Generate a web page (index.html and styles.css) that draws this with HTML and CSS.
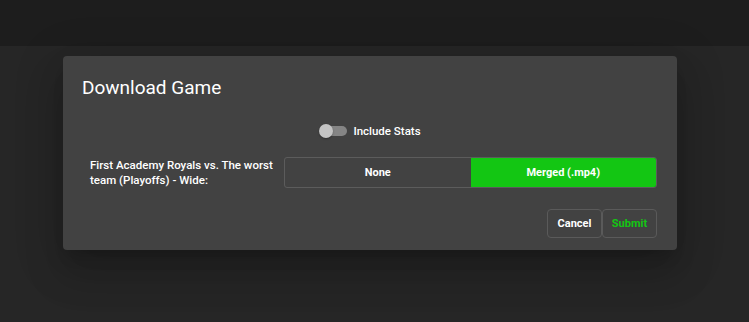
FILE: index.html
```html
<!DOCTYPE html>
<html lang="en">
<head>
    <meta charset="UTF-8">
    <meta name="viewport" content="width=device-width, initial-scale=1.0">
    <title>Download Game</title>
    <link rel="stylesheet" href="styles.css">
</head>
<body>
    <div class="appbar"></div>

    <div class="dialog">
        <div class="dialog-title">Download Game</div>

        <div class="switch-row">
            <span class="switch">
                <span class="switch-track"></span>
                <span class="switch-thumb"></span>
            </span>
            <span class="switch-label">Include Stats</span>
        </div>

        <div class="option-row">
            <div class="option-label">First Academy Royals vs. The worst team (Playoffs) - Wide:</div>
            <div class="toggle-group">
                <button class="toggle-button">None</button>
                <button class="toggle-button selected">Merged (.mp4)</button>
            </div>
        </div>

        <div class="dialog-actions">
            <button class="action-button">Cancel</button>
            <button class="action-button submit">Submit</button>
        </div>
    </div>
</body>
</html>
```

FILE: styles.css
```css
body {
    margin: 0;
    padding: 0;
    height: 322px;
    overflow: hidden;
    background-color: #262626;
    font-family: Roboto, "Liberation Sans", sans-serif;
    color: #fff;
}
.appbar {
    height: 46px;
    background-color: #1d1d1d;
}
.dialog {
    width: 614px;
    margin: 10px 0 0 63px;
    padding-bottom: 12px;
    background-color: #424242;
    border-radius: 4px;
    box-shadow: 0 11px 15px -7px rgba(0,0,0,0.2), 0 24px 38px 3px rgba(0,0,0,0.14), 0 9px 46px 8px rgba(0,0,0,0.12);
}
.dialog-title {
    padding: 20px 19px 0;
    font-size: 19px;
    line-height: 24px;
    font-weight: 400;
}
.switch-row {
    display: flex;
    justify-content: center;
    align-items: center;
    gap: 6px;
    margin-top: 21px;
    height: 20px;
}
.switch {
    position: relative;
    width: 28px;
    height: 14px;
}
.switch-track {
    position: absolute;
    left: 1px;
    right: 0;
    top: 2px;
    height: 10px;
    border-radius: 5px;
    background-color: #858585;
}
.switch-thumb {
    position: absolute;
    left: 0;
    top: 0;
    width: 14px;
    height: 14px;
    border-radius: 50%;
    background-color: #c4c4c4;
    box-shadow: 0 1px 2px rgba(0,0,0,0.3);
}
.switch-label {
    font-size: 11.5px;
    font-weight: 500;
}
.option-row {
    display: flex;
    align-items: center;
    margin-top: 16px;
    padding: 0 20px 0 27px;
}
.option-label {
    flex: 1;
    font-size: 11.5px;
    line-height: 15px;
    font-weight: 500;
}
.toggle-group {
    display: flex;
    width: 373px;
    height: 31px;
    border: 1px solid #5c5c5c;
    border-radius: 3px;
    box-sizing: border-box;
    overflow: hidden;
}
.toggle-button {
    flex: 1;
    border: none;
    background: transparent;
    color: #fff;
    font-family: Roboto, "Liberation Sans", sans-serif;
    font-size: 11px;
    font-weight: bold;
    padding: 0;
}
.toggle-button.selected {
    background-color: #13c613;
}
.dialog-actions {
    display: flex;
    justify-content: flex-end;
    margin-top: 21px;
    padding-right: 20px;
}
.action-button {
    width: 55px;
    height: 29px;
    background: transparent;
    border: 1px solid #5a5a5a;
    border-radius: 4px;
    color: #fff;
    font-family: Roboto, "Liberation Sans", sans-serif;
    font-size: 11px;
    font-weight: bold;
    padding: 0;
}
.action-button.submit {
    color: #13c613;
}
```
